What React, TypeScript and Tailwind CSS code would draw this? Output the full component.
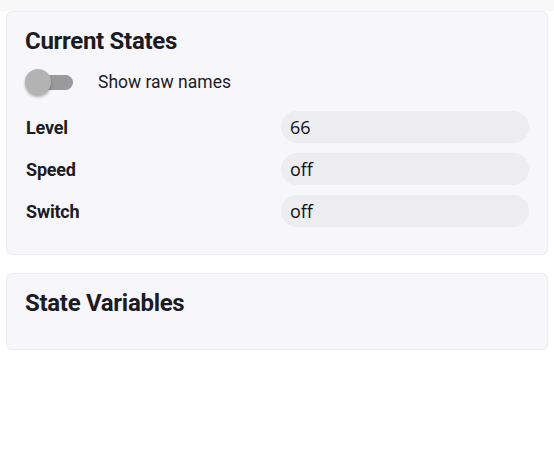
import React from "react";

const rows = [
  { label: "Level", value: "66" },
  { label: "Speed", value: "off" },
  { label: "Switch", value: "off" },
];

export default function App() {
  return (
    <div className="w-[554px] h-[465px] bg-white font-['Roboto',sans-serif] text-[#1c1b1f]">
      <div className="h-[11px] bg-[#f8f8f8]" />
      <div className="px-[6px]">
        <div className="rounded-[6px] border border-[#ebebf0] bg-[#f7f7fb] px-[18px] pt-[14px] pb-[27px]">
          <h2 className="text-[24px] font-bold leading-[30px] tracking-[-0.3px]">Current States</h2>
          <div className="mt-[13px] flex items-center h-[26px]">
            <div className="relative w-[48px] h-[26px]">
              <div className="absolute left-[6px] top-[6px] w-[42px] h-[15px] rounded-full bg-[#9a9a9a]" />
              <div className="absolute left-0 top-0 w-[26px] h-[26px] rounded-full bg-[#b3b3b3] shadow-[0_2px_3px_rgba(0,0,0,0.3)]" />
            </div>
            <span className="ml-[25px] text-[17.5px] leading-[20px]">Show raw names</span>
          </div>
          <div className="mt-[16px] flex flex-col gap-[10px]">
            {rows.map((r) => (
              <div key={r.label} className="grid grid-cols-2 gap-[8px] items-center">
                <span className="pl-[1px] pt-[1px] text-[18px] font-bold leading-[20px] tracking-[-0.2px]">{r.label}</span>
                <div className="h-[32px] rounded-[16px] bg-[#ececf1] px-[9px] flex items-center font-['Open_Sans',sans-serif] text-[18px] text-[#111111]">
                  {r.value}
                </div>
              </div>
            ))}
          </div>
        </div>
        <div className="mt-[18px] h-[77px] rounded-[6px] border border-[#ebebf0] bg-[#f7f7fb] px-[18px] pt-[14px]">
          <h2 className="text-[24px] font-bold leading-[30px] tracking-[-0.3px]">State Variables</h2>
        </div>
      </div>
    </div>
  );
}
